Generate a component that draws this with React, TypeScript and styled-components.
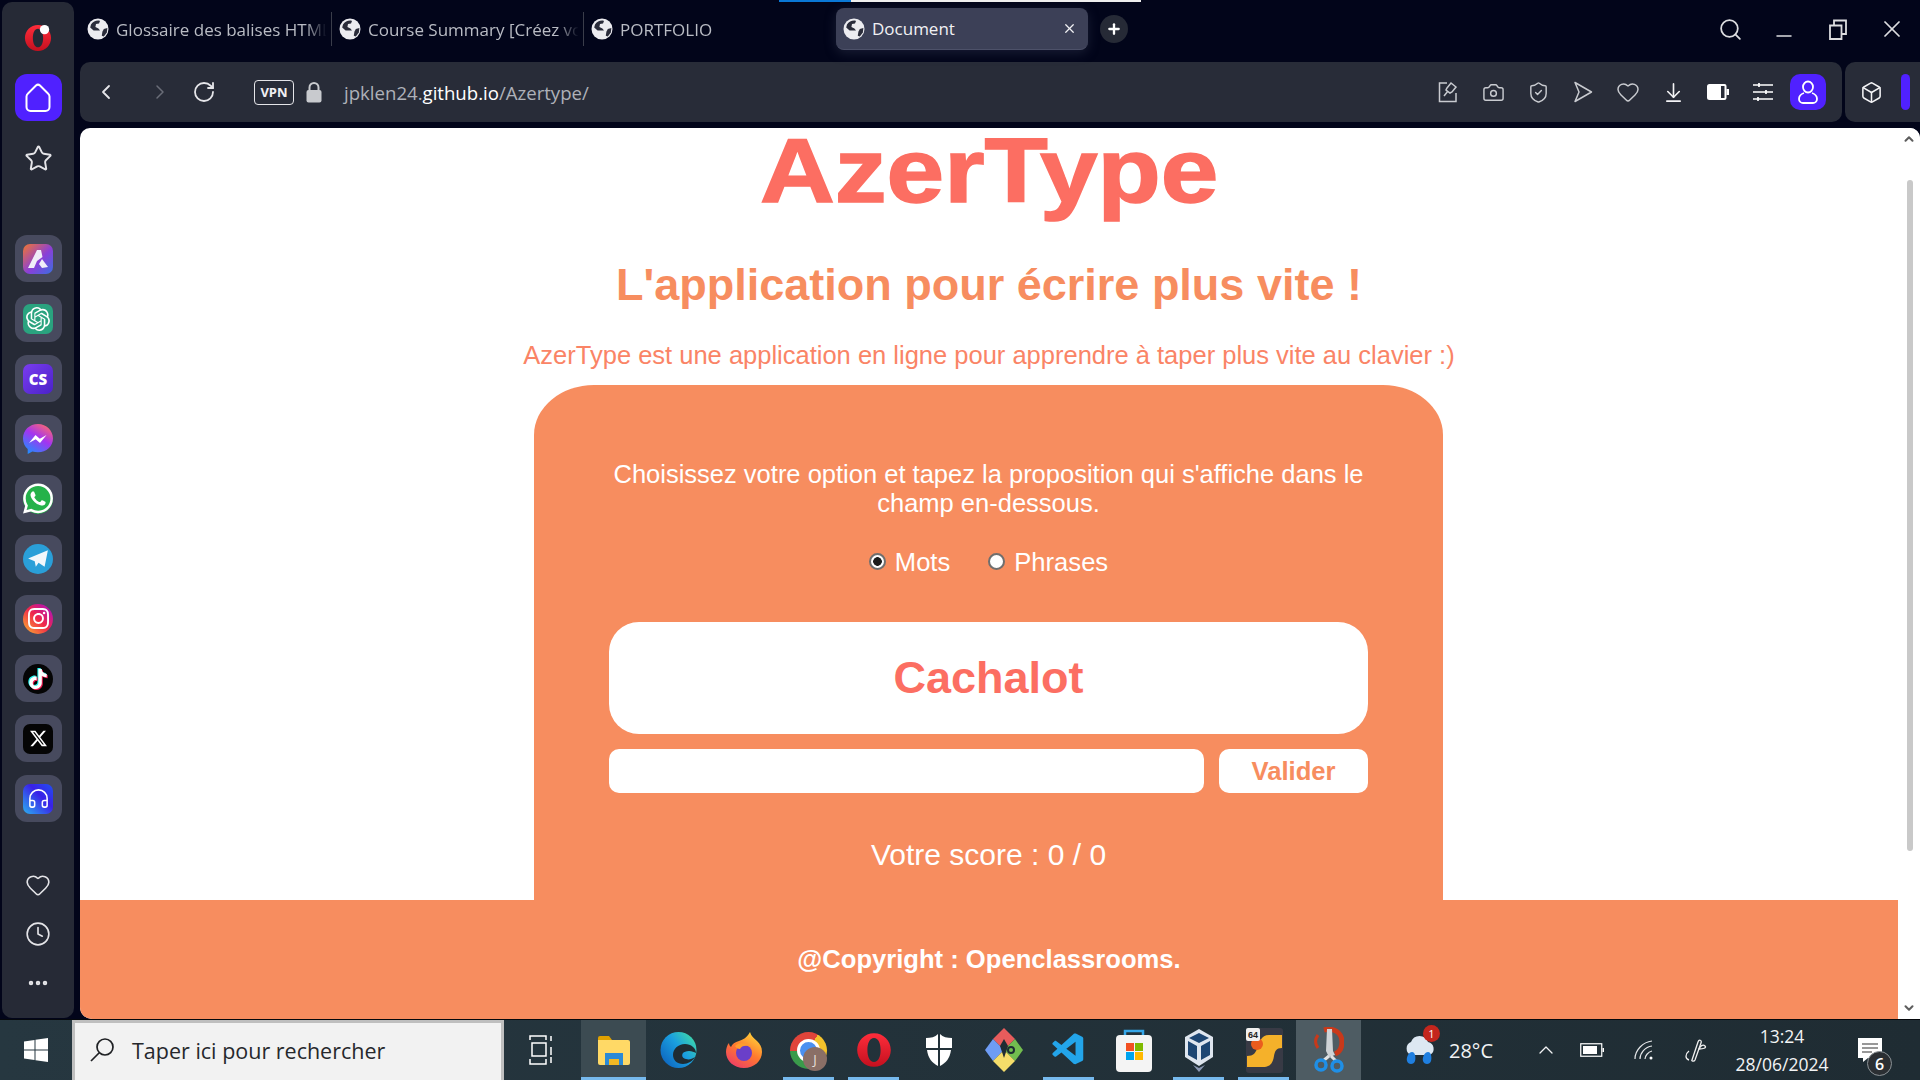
import React from "react";
import styled, { createGlobalStyle } from "styled-components";
import {
  ArrowDownToLine,
  Box as CubeIcon,
  Camera,
  ChevronDown,
  ChevronLeft,
  ChevronRight,
  ChevronUp,
  Clock,
  Headphones,
  Heart,
  RotateCw,
  Search,
  ShieldCheck,
  Star,
  X,
  Minus,
  Plus,
  Ellipsis,
} from "lucide-react";
import { SiInstagram, SiOpenai, SiTiktok, SiWhatsapp, SiX } from "react-icons/si";
import { VscVscode } from "react-icons/vsc";

const CORAL = "#f78d5f";
const SALMON = "#fc6e62";
const UI_FONT = `"Open Sans", "Noto Sans", sans-serif`;
const PAGE_FONT = `"Liberation Sans", Arial, sans-serif`;

const GlobalStyle = createGlobalStyle`
  html, body {
    margin: 0;
    padding: 0;
    width: 1920px;
    height: 1080px;
    overflow: hidden;
    background: #02051a;
    font-family: ${UI_FONT};
  }
  * { box-sizing: border-box; }
`;

const Screen = styled.div`
  width: 1920px;
  height: 1080px;
  display: flex;
  flex-direction: column;
`;

const Desktop = styled.div`
  height: 1019px;
  display: flex;
`;

const Sidebar = styled.aside`
  width: 72px;
  margin: 2px 0 1px 2px;
  background: #262a36;
  border-radius: 10px;
  display: flex;
  flex-direction: column;
  align-items: center;
`;

const SideLogo = styled.div`
  height: 72px;
  display: flex;
  align-items: center;
  justify-content: center;
`;

const HomeButton = styled.div`
  width: 47px;
  height: 47px;
  border-radius: 12px;
  background: #5021ff;
  color: #fff;
  display: flex;
  align-items: center;
  justify-content: center;
`;

const SideIcon = styled.div`
  width: 47px;
  height: 49px;
  color: #e4e4e8;
  display: flex;
  align-items: center;
  justify-content: center;
`;

const StarSlot = styled(SideIcon)`
  margin: 14px 0 53px;
  height: 47px;
`;

const AppList = styled.div`
  display: flex;
  flex-direction: column;
  gap: 13px;
`;

const AppTile = styled.div`
  width: 47px;
  height: 47px;
  border-radius: 12px;
  background: #474a5e;
  display: flex;
  align-items: center;
  justify-content: center;
`;

const AppGlyph = styled.div<{ $bg: string; $round?: boolean }>`
  position: relative;
  width: 30px;
  height: 30px;
  border-radius: ${p => (p.$round ? "50%" : "7px")};
  background: ${p => p.$bg};
  color: #fff;
  display: flex;
  align-items: center;
  justify-content: center;
`;

const CsLabel = styled.span`
  font: 800 15px ${UI_FONT};
  color: #fff;
`;

const SideBottom = styled.div`
  margin-top: 38px;
  display: flex;
  flex-direction: column;
  align-items: center;
`;

const Main = styled.div`
  flex: 1;
  min-width: 0;
  padding-left: 6px;
  display: flex;
  flex-direction: column;
`;

const TopRow = styled.div`
  position: relative;
  height: 62px;
  flex-shrink: 0;
  display: flex;
  align-items: center;
  padding-bottom: 4px;
`;

const LoadBar = styled.div`
  position: absolute;
  top: 0;
  left: 699px;
  width: 362px;
  height: 2px;
  background: linear-gradient(to right, #0a78d6 0 72px, #eeeeee 72px);
`;

const Tab = styled.div`
  width: 252px;
  height: 34px;
  flex-shrink: 0;
  padding-left: 7px;
  display: flex;
  align-items: center;
  gap: 7px;
  color: #b9bcc4;
  font-size: 17px;
  border-right: 1px solid #3a3d4a;
`;

const TabTitle = styled.span`
  flex: 1;
  min-width: 0;
  padding-right: 4px;
  white-space: nowrap;
  overflow: hidden;
  -webkit-mask-image: linear-gradient(to right, #000 88%, transparent 98%);
  mask-image: linear-gradient(to right, #000 88%, transparent 98%);
`;

const PlainTab = styled(Tab)`
  border-right: 0;
`;

const ActiveTab = styled(Tab)`
  height: 42px;
  color: #f1f1f4;
  background: #3c4057;
  border: 0;
  border-bottom: 1px solid #4d5169;
  border-radius: 8px;
  box-shadow: 0 3px 12px rgba(70, 74, 100, 0.35);
  padding-right: 11px;
`;

const ActiveTitle = styled.span`
  flex: 1;
`;

const NewTab = styled.div`
  width: 28px;
  height: 28px;
  margin-left: 12px;
  border-radius: 50%;
  background: #262a36;
  color: #fff;
  display: flex;
  align-items: center;
  justify-content: center;
`;

const WindowControls = styled.div`
  margin-left: auto;
  padding-right: 1px;
  display: flex;
  color: #dcdde0;
`;

const WindowButton = styled.div`
  width: 54px;
  height: 40px;
  display: flex;
  align-items: center;
  justify-content: center;
`;

const BarRow = styled.div`
  height: 60px;
  flex-shrink: 0;
  display: flex;
  gap: 3px;
`;

const AddressBar = styled.div`
  flex: 1;
  background: #282c38;
  border-radius: 10px;
  padding: 0 16px 0 8px;
  display: flex;
  align-items: center;
`;

const NavButton = styled.div<{ $dim?: boolean; $w: number }>`
  width: ${p => p.$w}px;
  display: flex;
  justify-content: center;
  color: ${p => (p.$dim ? "#6a6d78" : "#e6e6ea")};
  svg {
    flex-shrink: 0;
  }
`;

const VpnBadge = styled.div`
  width: 40px;
  height: 25px;
  margin-left: 42px;
  border: 1px solid #e4e4e8;
  border-radius: 4px;
  color: #f0f0f3;
  font: 700 13px ${UI_FONT};
  display: flex;
  align-items: center;
  justify-content: center;
`;

const LockSlot = styled.div`
  width: 40px;
  display: flex;
  justify-content: center;
`;

const Url = styled.div`
  margin: 1px 0 0 10px;
  font-size: 18.6px;
  color: #aeb1b9;
  white-space: nowrap;
  b {
    font-weight: 400;
    color: #fff;
  }
`;

const BarIcons = styled.div`
  margin-left: auto;
  display: flex;
  align-items: center;
  gap: 9px;
`;

const BarIcon = styled.div<{ $bright?: boolean }>`
  width: 36px;
  height: 36px;
  color: ${p => (p.$bright ? "#f4f4f6" : "#c9cbd0")};
  display: flex;
  align-items: center;
  justify-content: center;
`;

const ProfileButton = styled(BarIcon)`
  background: #5021ff;
  color: #fff;
  border-radius: 10px;
`;

const ExtensionBar = styled.div`
  width: 75px;
  background: #282c38;
  border-radius: 10px 0 0 10px;
  padding-left: 8px;
  display: flex;
  align-items: center;
  gap: 12px;
  color: #f0f0f3;
`;

const ExtensionTab = styled.div`
  width: 9px;
  height: 36px;
  border-radius: 5px;
  background: #5021ff;
`;

const Viewport = styled.div`
  flex: 1;
  min-height: 0;
  margin-top: 6px;
  background: #fff;
  border-radius: 10px 10px 0 12px;
  overflow: hidden;
  display: flex;
`;

const Page = styled.main`
  flex: 1;
  min-width: 0;
  display: flex;
  flex-direction: column;
  align-items: center;
  font-family: ${PAGE_FONT};
`;

const Title = styled.h1`
  margin: 0;
  font-size: 90px;
  line-height: 86px;
  font-weight: 700;
  color: ${SALMON};
  -webkit-text-stroke: 1.500px ${SALMON};
  transform: scaleX(1.15);
`;

const Subtitle = styled.h2`
  margin: 46px 0 0;
  font-size: 45px;
  line-height: 50px;
  font-weight: 700;
  color: ${CORAL};
`;

const Intro = styled.p`
  margin: 30px 0 0;
  font-size: 25.5px;
  line-height: 30px;
  color: #fa8466;
`;

const Card = styled.section`
  flex: 1;
  min-height: 0;
  width: 909px;
  margin: 15px 1px 0 0;
  padding: 75px 75px 0;
  background: ${CORAL};
  border-radius: 60px 60px 0 0 / 50px 50px 0 0;
  display: flex;
  flex-direction: column;
  align-items: center;
  color: #fff;
`;

const Instructions = styled.p`
  margin: 0;
  font-size: 25.5px;
  line-height: 29px;
  text-align: center;
`;

const Options = styled.div`
  margin-top: 29px;
  height: 30px;
  display: flex;
  align-items: center;
  gap: 38px;
`;

const Option = styled.label`
  display: flex;
  align-items: center;
  gap: 9px;
  font-size: 25.6px;
`;

const Radio = styled.input`
  appearance: none;
  width: 17px;
  height: 17px;
  margin: 0 0 2px;
  border: 2px solid #6f6f6f;
  border-radius: 50%;
  background: #fff;
  &:checked {
    background: radial-gradient(circle, #1c1c1c 0 4px, #fff 4.6px);
  }
`;

const Prompt = styled.div`
  width: 759px;
  height: 112px;
  margin-top: 45px;
  flex-shrink: 0;
  background: #fff;
  border-radius: 30px;
  color: ${SALMON};
  font-size: 45px;
  font-weight: 700;
  display: flex;
  align-items: center;
  justify-content: center;
`;

const AnswerRow = styled.div`
  width: 759px;
  height: 44px;
  margin-top: 15px;
  flex-shrink: 0;
  display: flex;
  gap: 15px;
`;

const AnswerInput = styled.input`
  flex: 1;
  border: 0;
  border-radius: 10px;
  background: #fff;
`;

const SubmitButton = styled.button`
  width: 149px;
  border: 0;
  border-radius: 10px;
  background: #fff;
  color: ${CORAL};
  font: 700 25.6px ${PAGE_FONT};
`;

const Score = styled.div`
  margin-top: 47px;
  font-size: 30px;
  line-height: 30px;
`;

const Footer = styled.footer`
  width: 100%;
  height: 119px;
  flex-shrink: 0;
  background: ${CORAL};
  color: #fff;
  font-size: 25.6px;
  font-weight: 700;
  display: flex;
  align-items: center;
  justify-content: center;
`;

const Scrollbar = styled.div`
  width: 22px;
  flex-shrink: 0;
  padding: 4px 0;
  color: #5e5e5e;
  background: #fff;
  display: flex;
  flex-direction: column;
  align-items: center;
  justify-content: space-between;
`;

const ScrollThumb = styled.div`
  flex: 1;
  width: 6px;
  margin: 34px 0 150px 1px;
  border-radius: 3px;
  background: #c9c9c9;
`;

const Taskbar = styled.div`
  height: 61px;
  flex-shrink: 0;
  border-top: 1px solid #05080c;
  background: linear-gradient(to right, #263740, #1f2c33);
  display: flex;
  align-items: stretch;
`;

const StartButton = styled.div`
  width: 72px;
  display: flex;
  align-items: center;
  justify-content: center;
`;

const SearchBox = styled.div`
  width: 432px;
  border: 3px solid #bfbfbf;
  border-bottom-width: 0;
  background: #f2f2f2;
  padding: 0 0 3px 14px;
  display: flex;
  align-items: center;
  gap: 17px;
  font-size: 21.5px;
  color: #26282c;
`;

const TaskViewSlot = styled.div`
  width: 77px;
  padding-right: 3px;
  display: flex;
  align-items: center;
  justify-content: center;
  color: #fff;
`;

const TaskSlot = styled.div<{ $open?: boolean; $active?: boolean; $hover?: boolean }>`
  position: relative;
  width: 65px;
  display: flex;
  align-items: center;
  justify-content: center;
  background: ${p => (p.$active ? "#3c4b52" : p.$hover ? "#4e5c63" : "transparent")};
  &::after {
    content: "";
    display: ${p => (p.$open ? "block" : "none")};
    position: absolute;
    bottom: 0;
    left: ${p => (p.$active || p.$hover ? "0" : "7px")};
    right: ${p => (p.$active || p.$hover ? "0" : "7px")};
    height: 3px;
    background: #76b9ed;
  }
`;

const AvatarBadge = styled.span`
  position: absolute;
  left: 27px;
  top: 27px;
  width: 24px;
  height: 24px;
  border-radius: 50%;
  background: #8a6f66;
  color: #e8e0dc;
  font-size: 13px;
  display: flex;
  align-items: center;
  justify-content: center;
`;

const Tray = styled.div`
  margin-left: auto;
  padding-right: 22px;
  display: flex;
  align-items: center;
  color: #f2f4f5;
`;

const WeatherSlot = styled.div`
  position: relative;
  width: 44px;
  display: flex;
  justify-content: center;
`;

const WeatherBadge = styled.span`
  position: absolute;
  left: 25px;
  top: -10px;
  width: 17px;
  height: 17px;
  border-radius: 50%;
  background: #c4261d;
  color: #fff;
  font-size: 11px;
  display: flex;
  align-items: center;
  justify-content: center;
`;

const Temperature = styled.span`
  margin-left: 7px;
  width: 77px;
  font-size: 20px;
`;

const TraySlot = styled.div`
  width: 52px;
  display: flex;
  justify-content: center;
`;

const CaretSlot = styled(TraySlot)`
  width: 40px;
`;

const ClockBox = styled.div`
  width: 120px;
  text-align: center;
  font-size: 17.500px;
  line-height: 28px;
`;

const NotifySlot = styled.div`
  position: relative;
  width: 56px;
  display: flex;
  justify-content: center;
`;

const NotifyCount = styled.span`
  position: absolute;
  left: 25px;
  top: 13px;
  width: 25px;
  height: 25px;
  border-radius: 50%;
  border: 1px solid #8b9296;
  background: #2b2f33;
  color: #fff;
  font-size: 16px;
  font-weight: 600;
  display: flex;
  align-items: center;
  justify-content: center;
`;

const ChromeDisc = styled.div`
  width: 37px;
  height: 37px;
  margin-right: 1px;
  border-radius: 50%;
  background: conic-gradient(from 30deg, #f4c22b 0 120deg, #3a9a4b 120deg 240deg, #e0443a 240deg 360deg);
  display: flex;
  align-items: center;
  justify-content: center;
  &::after {
    content: "";
    width: 17px;
    height: 17px;
    border-radius: 50%;
    background: #4a90f0;
    border: 3px solid #fff;
  }
`;

const Globe = ({ size = 22 }: { size?: number }) => (
  <svg width={size} height={size} viewBox="0 0 22 22" style={{ flexShrink: 0 }}>
    <circle cx="11" cy="11" r="10.500" fill="#ececf0" />
    <path d="M4 6.500c2-3 6-4.600 9-3.600l-1 2.600-3 .5-.6 3 3 1.400 1.600 2.200H6.600L3.200 9.400z" fill="#2a2c3a" />
    <path d="M20.400 10l-.6 4.600-3 4-2-.8.6-4 1.400-2.800z" fill="#2a2c3a" />
  </svg>
);

const OperaRing = ({ size, dot }: { size: number; dot?: boolean }) => (
  <svg width={size} height={size} viewBox="0 0 30 30">
    <defs>
      <linearGradient id={dot ? "opA" : "opB"} x1="0" y1="0" x2="0" y2="1">
        <stop offset="0" stopColor="#ff2d3b" />
        <stop offset="1" stopColor="#c4101f" />
      </linearGradient>
    </defs>
    <path
      fillRule="evenodd"
      d="M15 1C7 1 1 7.300 1 15s6 14 14 14 14-6.300 14-14S23 1 15 1zm0 4c-3.600 0-5.500 4.500-5.500 10s1.900 10 5.500 10 5.500-4.500 5.500-10S18.600 5 15 5z"
      fill={`url(#${dot ? "opA" : "opB"})`}
    />
    {dot && <circle cx="22" cy="6" r="5" fill="#fff" />}
  </svg>
);

const HomeIcon = () => (
  <svg width="26" height="30" viewBox="0 0 26 30" fill="none" stroke="currentColor" strokeWidth="2">
    <path d="M11 2.500a3 3 0 0 1 4 0l8 8a4 4 0 0 1 1.500 3V24a4 4 0 0 1-4 4h-15a4 4 0 0 1-4-4V13.500a4 4 0 0 1 1.500-3z" />
  </svg>
);

const AriaMark = () => (
  <svg width="24" height="24" viewBox="0 0 24 24" fill="#f0eef8">
    <path d="M11 3h4l1.500 7-5.500 4-3 7H2z" />
    <path d="M16 12l6 8-6 1-3-4z" />
  </svg>
);

const MessengerMark = () => (
  <svg width="30" height="30" viewBox="0 0 30 30">
    <defs>
      <linearGradient id="msg" x1="0.8" y1="0" x2="0.2" y2="1">
        <stop offset="0" stopColor="#ff6a6e" />
        <stop offset="0.45" stopColor="#a433f0" />
        <stop offset="1" stopColor="#1f8fff" />
      </linearGradient>
    </defs>
    <path d="M15 0C6.500 0 0 6.200 0 14.400c0 4.300 1.800 8 4.700 10.500V30l4.700-2.600c1.700.5 3.600.8 5.600.8 8.500 0 15-6.200 15-13.800S23.500 0 15 0z" fill="url(#msg)" />
    <path d="M6 19l6.500-8 4.300 3.700 6.700-3.700-6.500 8-4.300-3.700z" fill="#fff" />
  </svg>
);

const PlaneMark = () => (
  <svg width="22" height="22" viewBox="0 0 20 20" fill="#f2f7fb">
    <path d="M1 9.500 19 2l-3 15-5.500-3.500L8 17l-1-5z" />
  </svg>
);

const WindowsLogo = () => (
  <svg width="24" height="24" viewBox="0 0 24 24" fill="#fff">
    <path d="M0 3.500 10.500 2v9.500H0zM11.500 1.800 24 0v11.500H11.500zM0 12.500h10.500V22L0 20.500zM11.500 12.500H24V24l-12.500-1.800z" />
  </svg>
);

const SearchGlass = () => (
  <svg width="26" height="26" viewBox="0 0 26 26" fill="none" stroke="#1f2124" strokeWidth="1.700">
    <circle cx="16" cy="10" r="8" />
    <path d="M10 16 2 24" />
  </svg>
);

const TaskViewIcon = () => (
  <svg width="24" height="30" viewBox="0 0 24 30" fill="none" stroke="#fff" strokeWidth="1.500">
    <path d="M1 5V1h16v4M3 8h14v13H3zM1 24v5h16v-5" />
    <path d="M22 1v5M22 12v8M22 22v6" />
  </svg>
);

const ExplorerIcon = () => (
  <svg width="32" height="30" viewBox="0 0 32 30">
    <path d="M0 3a2 2 0 0 1 2-2h9l3 4h-14z" fill="#e0a100" />
    <path d="M0 5h30a2 2 0 0 1 2 2v21a2 2 0 0 1-2 2H2a2 2 0 0 1-2-2z" fill="#ffd966" />
    <path d="M7 30V18h18v12h-4v-6H11v6z" fill="#2b8ad6" />
    <path d="M11 24h10v6H11z" fill="#f2b824" />
  </svg>
);

const EdgeIcon = () => (
  <svg width="37" height="38" viewBox="0 0 37 38">
    <defs>
      <linearGradient id="edgeA" x1="0" y1="1" x2="1" y2="0.2">
        <stop offset="0" stopColor="#0b59b8" />
        <stop offset="0.6" stopColor="#1a9fe0" />
        <stop offset="1" stopColor="#3fd8a8" />
      </linearGradient>
    </defs>
    <circle cx="18.500" cy="19" r="18" fill="url(#edgeA)" />
    <path d="M36 22c0-5-5-9-11-9-7 0-12 5-12 11 0 5 4 9 10 9 5 0 10-3 12-7-3 2-6 3-9 2-3-.5-5-3-3-6 1-1 3-2 6-2 3 0 5 1 7 2z" fill="#1f2c33" />
  </svg>
);

const FirefoxIcon = () => (
  <svg width="36" height="36" viewBox="0 0 36 36">
    <defs>
      <linearGradient id="ffA" x1="0.8" y1="0" x2="0.2" y2="1">
        <stop offset="0" stopColor="#ffd83a" />
        <stop offset="0.5" stopColor="#ff7a2e" />
        <stop offset="1" stopColor="#ee3a6a" />
      </linearGradient>
    </defs>
    <path d="M24 0c1 4 4 6 7 9 3 3 5 6 5 11 0 9-8 16-18 16S0 29 0 20c0-3 1-7 3-9 0 2 1 3 2 4 1-3 4-5 8-6 3-1 8-3 11-9z" fill="url(#ffA)" />
    <circle cx="18" cy="21" r="8" fill="#6a3fc9" />
    <path d="M9 14c4-4 11-3 14 0-4-1-8 0-9 3-2 0-4-1-5-3z" fill="#ff9d2e" />
  </svg>
);

const DefenderIcon = () => (
  <svg width="26" height="32" viewBox="0 0 26 32" fill="#fff">
    <path d="M0 4c5 0 9-1 12-4v14H0z" />
    <path d="M14 0c3 3 7 4 12 4v10H14z" />
    <path d="M1 16h11v16C6 29 2 24 1 16z" />
    <path d="M14 16h11c-1 8-5 13-11 16z" />
  </svg>
);

const GitGuiIcon = () => (
  <svg width="38" height="46" viewBox="0 0 38 46">
    <path d="M19 1 30 12 19 23 8 12z" fill="#e85c5c" />
    <path d="M8 12 19 23 8 34 0 23z" fill="#6e9cf5" />
    <path d="M30 12 38 23 30 34 19 23z" fill="#72bd4f" />
    <path d="M19 23 30 34 19 45 8 34z" fill="#f5dd6a" />
    <path d="M19 12l-4 7 4 12 4-12z" fill="#1f2c33" />
    <circle cx="26" cy="23" r="3" fill="none" stroke="#1f2c33" strokeWidth="2" />
  </svg>
);

const StoreIcon = () => (
  <svg width="36" height="44" viewBox="0 0 36 44">
    <path d="M9 9V3h18v6" fill="none" stroke="#35a6e8" strokeWidth="2.500" />
    <rect x="0" y="7" width="36" height="37" rx="4" fill="#f4f4f4" />
    <rect x="10" y="15" width="8" height="8" fill="#f25022" />
    <rect x="19" y="15" width="8" height="8" fill="#7fba00" />
    <rect x="10" y="24" width="8" height="8" fill="#00a4ef" />
    <rect x="19" y="24" width="8" height="8" fill="#ffb900" />
  </svg>
);

const VirtualBoxIcon = () => (
  <svg width="32" height="46" viewBox="0 0 32 46">
    <path d="M16 2 30 10v20L16 39 2 30V10z" fill="#dfe6ef" />
    <path d="M16 6 26 11 16 16 6 11z" fill="#1d4673" />
    <path d="M5 14l9 5v14l-9-5zM27 14l-9 5v14l9-5z" fill="#1d4673" />
    <path d="M10 38l6 7 6-7-6 3z" fill="#8c99b5" />
  </svg>
);

const CodeBlocksIcon = () => (
  <svg width="38" height="46" viewBox="0 0 38 46">
    <rect x="1" y="1" width="37" height="45" rx="3" fill="#383a45" />
    <path d="M37 8v13c-6 0-7 3-8 8-1 6-3 11-11 11H2V29c7 0 8-3 10-7 2-6 4-14 12-14z" fill="#f5b12a" />
    <circle cx="12" cy="17" r="6" fill="#ea5c1e" />
    <rect x="1" y="1" width="14" height="13" rx="2" fill="#f0f0f0" />
    <text x="8" y="11" textAnchor="middle" fontSize="9" fontWeight="700" fill="#222" fontFamily="Liberation Sans">64</text>
  </svg>
);

const SnipIcon = () => (
  <svg width="30" height="46" viewBox="0 0 30 46" fill="none">
    <path d="M10 3c10-3 18 3 18 12 0 6-2 10-7 12" stroke="#c8391a" strokeWidth="5" />
    <path d="M4 8c-3 4-3 9 0 13" stroke="#c8391a" strokeWidth="3" />
    <path d="M13 2h5l1 22 2 4-6 2-3-6z" fill="#cfd3d6" />
    <path d="M15 29l-6 5M17 29l5 5" stroke="#dfe2e4" strokeWidth="3" />
    <circle cx="7" cy="38" r="5" stroke="#1f8fe6" strokeWidth="3.500" />
    <circle cx="23" cy="39" r="5" stroke="#1f8fe6" strokeWidth="3.500" />
  </svg>
);

const CloudIcon = () => (
  <svg width="34" height="30" viewBox="0 0 34 30">
    <path d="M8 20a7 7 0 0 1 0-13 9 9 0 0 1 17 0 7 7 0 0 1 2 13z" fill="#dde8f2" />
    <path d="M9 17c3 0 4 5 3 9-1 4-7 4-8 0-1-4 2-9 5-9zM25 17c3 0 4 5 3 9-1 4-7 4-8 0-1-4 2-9 5-9z" fill="#1f7fe0" />
  </svg>
);

const BatteryIcon = () => (
  <svg width="24" height="14" viewBox="0 0 24 14" fill="none">
    <rect x="0.750" y="0.750" width="21" height="12.500" stroke="#fff" strokeWidth="1.200" />
    <rect x="3" y="3" width="14" height="8" fill="#fff" />
    <rect x="22.500" y="5" width="1.500" height="4" fill="#fff" />
  </svg>
);

const WifiIcon = () => (
  <svg width="20" height="20" viewBox="0 0 20 20" fill="none" stroke="#e6e8ea" strokeWidth="1.200">
    <path d="M1 19C1 10 9 2 18 1M6 19c0-6 5-12 12-13M11 19c0-3 3-7 7-8" />
    <circle cx="17" cy="18" r="1.500" fill="#fff" stroke="none" />
  </svg>
);

const PenIcon = () => (
  <svg width="22" height="24" viewBox="0 0 22 24" fill="none" stroke="#f0f0f0" strokeWidth="1.300">
    <path d="M7 22 13 4c1-3 4-2 3 1L10 22c-1 2-4 1-3 0z" />
    <path d="M4 13c-4 3-4 8 0 9M14 11c4 0 8-1 6-3s-5 0-6 3z" />
  </svg>
);

const ChatIcon = () => (
  <svg width="24" height="24" viewBox="0 0 24 24">
    <path d="M0 0h24v20H10l-5 4v-4H0z" fill="#fff" />
    <path d="M4 6h16M4 10h16M4 14h10" stroke="#333" strokeWidth="1.200" />
  </svg>
);

const RestoreIcon = () => (
  <svg width="18" height="21" viewBox="0 0 18 21" fill="none" stroke="currentColor" strokeWidth="1.800">
    <path d="M1 6.500h11.500V20H1z" />
    <path d="M5 6V1.500h12V15h-4.500" />
  </svg>
);

const LockIcon = () => (
  <svg width="16" height="22" viewBox="0 0 16 22">
    <path d="M3.500 10V6.500a4.500 4.500 0 0 1 9 0V10" fill="none" stroke="#c8cace" strokeWidth="2" />
    <rect x="0.500" y="9" width="15" height="12.500" rx="2" fill="#c8cace" />
  </svg>
);

const PinIcon = () => (
  <svg width="20" height="22" viewBox="0 0 20 22" fill="none" stroke="currentColor" strokeWidth="1.500">
    <path d="M9 2H1.500v18.500H18V12" />
    <path d="M6 15l4-5M9 7l4-5 5 4-4 5-2 1-4-3z" />
  </svg>
);

const SendIcon = () => (
  <svg width="20" height="22" viewBox="0 0 20 22" fill="none" stroke="currentColor" strokeWidth="1.500" strokeLinejoin="round">
    <path d="M2 1.500 18.500 11 2 20.500 6 11z" />
  </svg>
);

const SidePanelIcon = () => (
  <svg width="22" height="16" viewBox="0 0 22 16">
    <path d="M2.500 0H14v16H2.500A2.500 2.500 0 0 1 0 13.500v-11A2.500 2.500 0 0 1 2.500 0z" fill="#fff" />
    <path d="M14 1h3.500a1 1 0 0 1 1 1v12a1 1 0 0 1-1 1H14" fill="none" stroke="#fff" strokeWidth="2" />
    <rect x="19.500" y="5" width="2.500" height="6" fill="#fff" />
  </svg>
);

const TuneIcon = () => (
  <svg width="20" height="20" viewBox="0 0 20 20" fill="none" stroke="#fff" strokeWidth="1.700">
    <path d="M0 3h20M0 10h20M0 17h20" />
    <path d="M6 1v4M13 8v4M5 15v4" />
  </svg>
);

const ProfileIcon = () => (
  <svg width="20" height="24" viewBox="0 0 20 24" fill="none" stroke="currentColor" strokeWidth="1.800">
    <ellipse cx="10" cy="7" rx="5" ry="5.500" />
    <path d="M6 13c-3 1-5 3-5 6 0 2.500 2 4 4 4h10c2 0 4-1.500 4-4 0-3-2-5-5-6" />
  </svg>
);

const apps = [
  { bg: "linear-gradient(135deg, #f2762e, #8a3fd8 55%, #3a6fe0)", node: <AriaMark /> },
  { bg: "#2aa37f", node: <SiOpenai size={24} /> },
  { bg: "linear-gradient(135deg, #7a3cf0, #4a22c8)", node: <CsLabel>CS</CsLabel> },
  { bg: "transparent", node: <MessengerMark />, round: true },
  { bg: "#25b24a", node: <SiWhatsapp size={31} />, round: true },
  { bg: "#2a9fd8", node: <PlaneMark />, round: true },
  { bg: "linear-gradient(45deg, #fdbb2d, #f0284a 50%, #a30dd0)", node: <SiInstagram size={21} />, round: true },
  { bg: "#050505", node: <SiTiktok size={20} style={{ filter: "drop-shadow(1px 1px 0 #ee1d52) drop-shadow(-1px -1px 0 #25f4ee)" }} />, round: true },
  { bg: "#050505", node: <SiX size={17} /> },
  { bg: "linear-gradient(45deg, #2bb0f0, #3a20e8 60%, #2050f0)", node: <Headphones size={23} strokeWidth={1.600} /> },
];

const App = () => {
  return (
    <>
      <GlobalStyle />
      <Screen>
        <Desktop>
          <Sidebar>
            <SideLogo>
              <OperaRing size={28} dot />
            </SideLogo>
            <HomeButton>
              <HomeIcon />
            </HomeButton>
            <StarSlot>
              <Star size={29} strokeWidth={1.600} />
            </StarSlot>
            <AppList>
              {apps.map((app, i) => (
                <AppTile key={i}>
                  <AppGlyph $bg={app.bg} $round={app.round}>
                    {app.node}
                  </AppGlyph>
                </AppTile>
              ))}
            </AppList>
            <SideBottom>
              <SideIcon>
                <Heart size={26} strokeWidth={1.500} />
              </SideIcon>
              <SideIcon>
                <Clock size={26} strokeWidth={1.500} />
              </SideIcon>
              <SideIcon>
                <Ellipsis size={24} strokeWidth={2.500} />
              </SideIcon>
            </SideBottom>
          </Sidebar>
          <Main>
            <TopRow>
              <LoadBar />
              <Tab>
                <Globe />
                <TabTitle>Glossaire des balises HTML</TabTitle>
              </Tab>
              <Tab>
                <Globe />
                <TabTitle>Course Summary [Créez votre site]</TabTitle>
              </Tab>
              <PlainTab>
                <Globe />
                <TabTitle>PORTFOLIO</TabTitle>
              </PlainTab>
              <ActiveTab>
                <Globe />
                <ActiveTitle>Document</ActiveTitle>
                <X size={15} />
              </ActiveTab>
              <NewTab>
                <Plus size={16} strokeWidth={3.500} />
              </NewTab>
              <WindowControls>
                <WindowButton>
                  <Search size={25} strokeWidth={1.700} />
                </WindowButton>
                <WindowButton>
                  <Minus size={24} strokeWidth={1.500} style={{ marginTop: 14 }} />
                </WindowButton>
                <WindowButton>
                  <RestoreIcon />
                </WindowButton>
                <WindowButton>
                  <X size={28} strokeWidth={1.500} />
                </WindowButton>
              </WindowControls>
            </TopRow>
            <BarRow>
              <AddressBar>
                <NavButton $w={36}>
                  <ChevronLeft size={24} strokeWidth={1.800} />
                </NavButton>
                <NavButton $w={72} $dim>
                  <ChevronRight size={24} strokeWidth={1.500} />
                </NavButton>
                <NavButton $w={16}>
                  <RotateCw size={24} strokeWidth={1.800} />
                </NavButton>
                <VpnBadge>VPN</VpnBadge>
                <LockSlot>
                  <LockIcon />
                </LockSlot>
                <Url>
                  jpklen24.<b>github.io</b>/Azertype/
                </Url>
                <BarIcons>
                  <BarIcon><PinIcon /></BarIcon>
                  <BarIcon><Camera size={23} strokeWidth={1.500} /></BarIcon>
                  <BarIcon><ShieldCheck size={23} strokeWidth={1.500} /></BarIcon>
                  <BarIcon><SendIcon /></BarIcon>
                  <BarIcon><Heart size={24} strokeWidth={1.500} /></BarIcon>
                  <BarIcon $bright><ArrowDownToLine size={23} strokeWidth={1.700} /></BarIcon>
                  <BarIcon $bright><SidePanelIcon /></BarIcon>
                  <BarIcon $bright><TuneIcon /></BarIcon>
                  <ProfileButton><ProfileIcon /></ProfileButton>
                </BarIcons>
              </AddressBar>
              <ExtensionBar>
                <BarIcon $bright><CubeIcon size={23} strokeWidth={1.600} /></BarIcon>
                <ExtensionTab />
              </ExtensionBar>
            </BarRow>
            <Viewport>
              <Page>
                <Title>AzerType</Title>
                <Subtitle>L'application pour écrire plus vite !</Subtitle>
                <Intro>AzerType est une application en ligne pour apprendre à taper plus vite au clavier :)</Intro>
                <Card>
                  <Instructions>
                    Choisissez votre option et tapez la proposition qui s'affiche dans le champ en-dessous.
                  </Instructions>
                  <Options>
                    <Option>
                      <Radio type="radio" name="mode" defaultChecked />
                      Mots
                    </Option>
                    <Option>
                      <Radio type="radio" name="mode" />
                      Phrases
                    </Option>
                  </Options>
                  <Prompt>Cachalot</Prompt>
                  <AnswerRow>
                    <AnswerInput type="text" />
                    <SubmitButton>Valider</SubmitButton>
                  </AnswerRow>
                  <Score>Votre score : 0 / 0</Score>
                </Card>
                <Footer>@Copyright : Openclassrooms.</Footer>
              </Page>
              <Scrollbar>
                <ChevronUp size={14} strokeWidth={3.500} />
                <ScrollThumb />
                <ChevronDown size={14} strokeWidth={3.500} />
              </Scrollbar>
            </Viewport>
          </Main>
        </Desktop>
        <Taskbar>
          <StartButton>
            <WindowsLogo />
          </StartButton>
          <SearchBox>
            <SearchGlass />
            Taper ici pour rechercher
          </SearchBox>
          <TaskViewSlot>
            <TaskViewIcon />
          </TaskViewSlot>
          <TaskSlot $open $active><ExplorerIcon /></TaskSlot>
          <TaskSlot><EdgeIcon /></TaskSlot>
          <TaskSlot><FirefoxIcon /></TaskSlot>
          <TaskSlot $open>
            <ChromeDisc />
            <AvatarBadge>J</AvatarBadge>
          </TaskSlot>
          <TaskSlot $open><OperaRing size={36} /></TaskSlot>
          <TaskSlot><DefenderIcon /></TaskSlot>
          <TaskSlot><GitGuiIcon /></TaskSlot>
          <TaskSlot $open><VscVscode size={38} color="#23a5ea" /></TaskSlot>
          <TaskSlot><StoreIcon /></TaskSlot>
          <TaskSlot $open><VirtualBoxIcon /></TaskSlot>
          <TaskSlot $open><CodeBlocksIcon /></TaskSlot>
          <TaskSlot $hover><SnipIcon /></TaskSlot>
          <Tray>
            <WeatherSlot>
              <CloudIcon />
              <WeatherBadge>1</WeatherBadge>
            </WeatherSlot>
            <Temperature>28°C</Temperature>
            <CaretSlot><ChevronUp size={24} strokeWidth={1.300} /></CaretSlot>
            <TraySlot><BatteryIcon /></TraySlot>
            <TraySlot><WifiIcon /></TraySlot>
            <TraySlot><PenIcon /></TraySlot>
            <ClockBox>
              13:24
              <br />
              28/06/2024
            </ClockBox>
            <NotifySlot>
              <ChatIcon />
              <NotifyCount>6</NotifyCount>
            </NotifySlot>
          </Tray>
        </Taskbar>
      </Screen>
    </>
  );
};

export default App;
